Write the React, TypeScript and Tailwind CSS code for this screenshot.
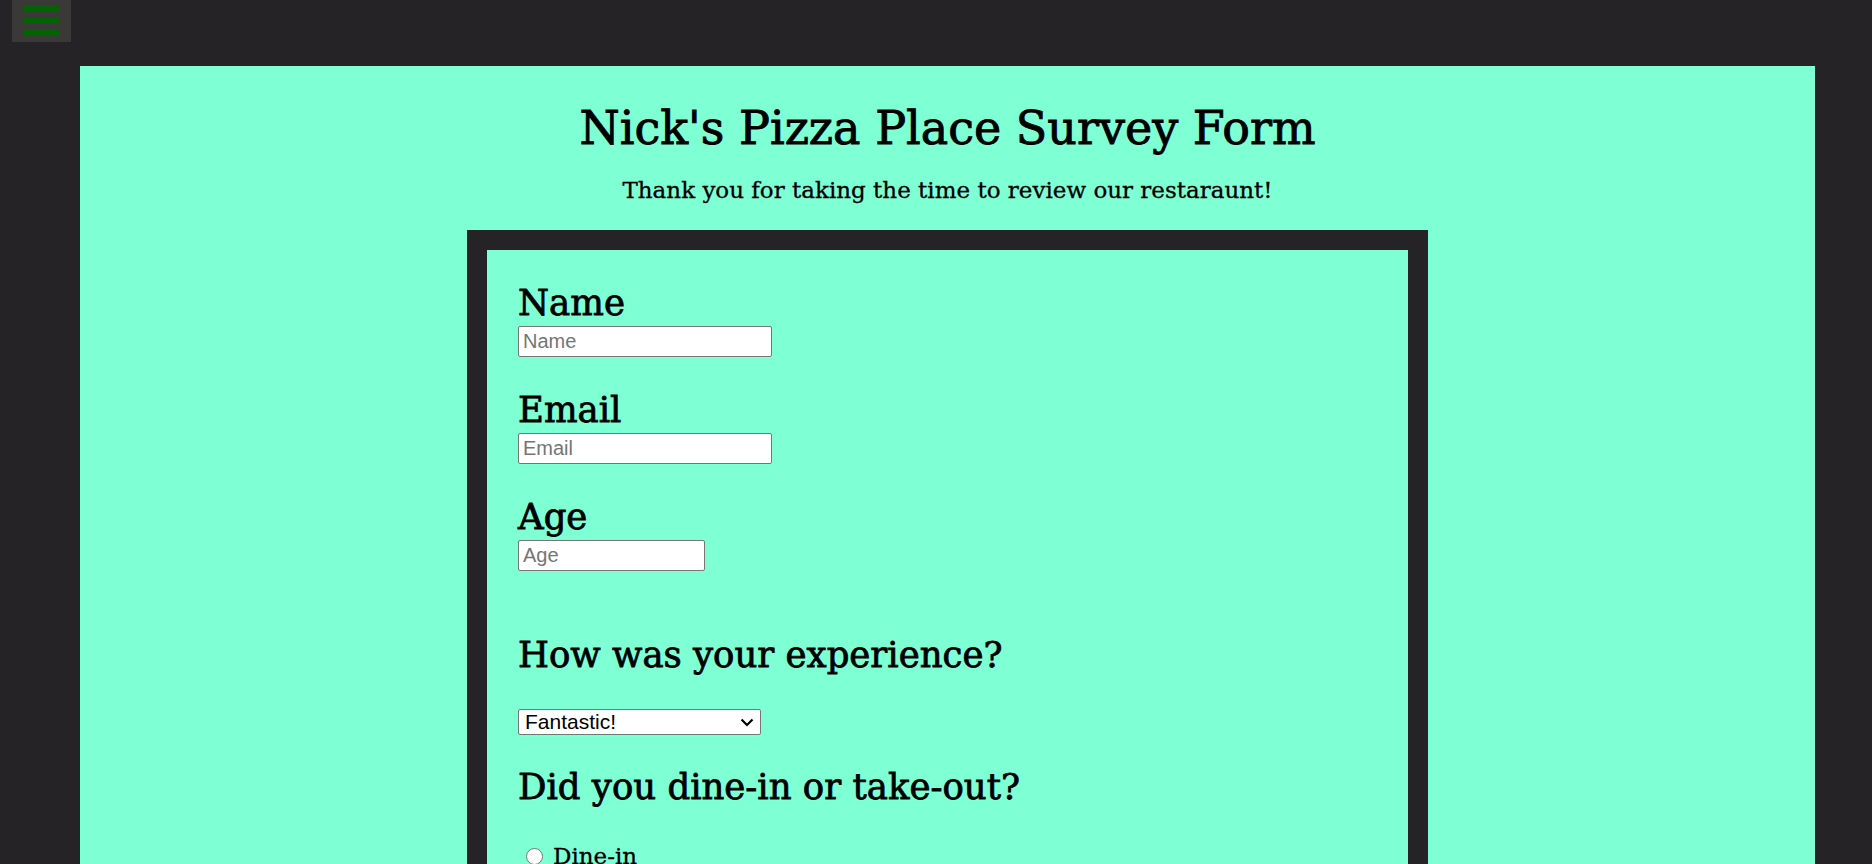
const serif = "font-['DejaVu_Serif','Liberation_Serif',serif]";

function MenuButton() {
  return (
    <button className="ml-[12px] w-[59px] h-[42px] bg-[#3a3937] flex flex-col items-center justify-center gap-[6px]">
      <span className="block w-[37px] h-[6px] rounded-full bg-[#006400]" />
      <span className="block w-[37px] h-[6px] rounded-full bg-[#006400]" />
      <span className="block w-[37px] h-[6px] rounded-full bg-[#006400]" />
    </button>
  );
}

type FieldProps = {
  label: string;
  type: string;
  width: string;
};

function Field({ label, type, width }: FieldProps) {
  return (
    <div className="flex flex-col items-start">
      <label className="text-[35.5px] leading-[46px] text-black [-webkit-text-stroke:0.8px_black]">{label}</label>
      <input
        type={type}
        placeholder={label}
        className={`${width} h-[31px] bg-white border border-[#767676] rounded-[2px] px-[4px] text-[20px] font-['Liberation_Sans',sans-serif] placeholder:text-[#757575] outline-none`}
      />
    </div>
  );
}

function Option({ text }: { text: string }) {
  return (
    <label className="flex items-center gap-[10px] text-[23px] leading-[28px] [-webkit-text-stroke:0.3px_black]">
      <input
        type="radio"
        name="visit"
        className="appearance-none ml-[8px] w-[17px] h-[17px] rounded-full border border-[#767676] bg-white"
      />
      {text}
    </label>
  );
}

export default function App() {
  return (
    <div className={`min-h-screen bg-[#252326] pb-10 ${serif}`}>
      <MenuButton />
      <main className="mt-[24px] ml-[80px] w-[1735px] bg-[#7fffd4] pt-[34px] pb-16 flex flex-col items-center text-black">
        <h1 className="text-[46px] leading-[56px] [-webkit-text-stroke:0.9px_black]">Nick's Pizza Place Survey Form</h1>
        <p className="mt-[20px] text-[23px] leading-[28px] [-webkit-text-stroke:0.3px_black]">
          Thank you for taking the time to review our restaraunt!
        </p>
        <form className="mt-[26px] w-[961px] border-[20px] border-[#252326] bg-[#7fffd4] pt-[30px] pl-[31px] pb-10">
          <div className="flex flex-col gap-[30px]">
            <Field label="Name" type="text" width="w-[254px]" />
            <Field label="Email" type="email" width="w-[254px]" />
            <Field label="Age" type="number" width="w-[187px]" />
          </div>
          <div className="mt-[61px] flex flex-col items-start">
            <label className="text-[35.5px] leading-[46px] [-webkit-text-stroke:0.8px_black]">How was your experience?</label>
            <div className="relative mt-[31px] w-[243px] h-[26px]">
              <select className="appearance-none w-full h-full bg-white border border-[#767676] rounded-[2px] pl-[6px] text-[21px] leading-[24px] font-['Liberation_Sans',sans-serif] text-black">
                <option>Fantastic!</option>
                <option>Good</option>
                <option>Okay</option>
                <option>Bad</option>
              </select>
              <svg
                className="absolute right-[7px] top-[9px] pointer-events-none"
                width="14"
                height="9"
                viewBox="0 0 14 9"
                fill="none"
              >
                <path d="M1.5 1.5 L7 7 L12.5 1.5" stroke="black" strokeWidth="2.2" />
              </svg>
            </div>
          </div>
          <div className="mt-[29px] flex flex-col items-start">
            <label className="text-[35.5px] leading-[46px] [-webkit-text-stroke:0.8px_black]">Did you dine-in or take-out?</label>
            <div className="mt-[32px] flex flex-col gap-3">
              <Option text="Dine-in" />
              <Option text="Take-out" />
            </div>
          </div>
        </form>
      </main>
    </div>
  );
}
